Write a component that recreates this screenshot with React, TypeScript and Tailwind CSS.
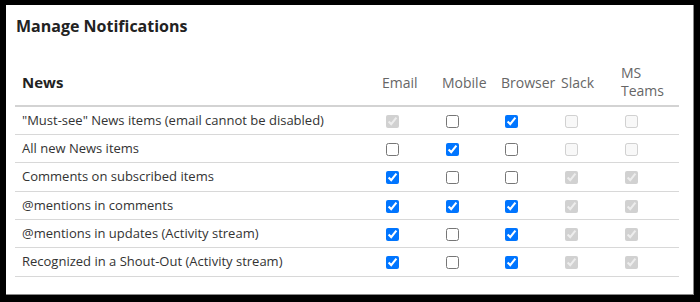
import React from 'react';

type Row = {
    label: string;
    email: boolean;
    mobile: boolean;
    browser: boolean;
    slack: boolean;
    teams: boolean;
    emailLocked?: boolean;
};

// Slack / MS Teams are always locked in this view
const rows: Row[] = [
    { label: '"Must-see" News items (email cannot be disabled)', email: true, mobile: false, browser: true, slack: false, teams: false, emailLocked: true },
    { label: 'All new News items', email: false, mobile: true, browser: false, slack: false, teams: false },
    { label: 'Comments on subscribed items', email: true, mobile: false, browser: false, slack: true, teams: true },
    { label: '@mentions in comments', email: true, mobile: true, browser: true, slack: true, teams: true },
    { label: '@mentions in updates (Activity stream)', email: true, mobile: false, browser: true, slack: true, teams: true },
    { label: 'Recognized in a Shout-Out (Activity stream)', email: true, mobile: false, browser: true, slack: true, teams: true },
];

const Box = ({ checked, disabled }: { checked: boolean; disabled?: boolean }) => (
    <input
        type="checkbox"
        defaultChecked={checked}
        disabled={disabled}
        className="m-0 ml-[4px] w-[13px] h-[13px] align-middle"
    />
);

const App: React.FC = () => {
    return (
        <div className="w-[700px] h-[302px] bg-black pt-[5px] pl-[6px] font-['Open_Sans',sans-serif]">
            <div className="w-[688px] h-[290px] bg-white border-r border-b border-[#8a8a8a] pl-[9px] pt-[10px]">
                {/* Заголовок */}
                <h1 className="pl-[1px] text-[16px] leading-[22px] font-bold text-[#222]">Manage Notifications</h1>

                <table className="mt-[27px] w-[664px] table-fixed border-collapse text-[13px] text-[#333]">
                    <colgroup>
                        <col className="w-[367px]" />
                        <col className="w-[60px]" />
                        <col className="w-[59px]" />
                        <col className="w-[60px]" />
                        <col className="w-[60px]" />
                        <col className="w-[58px]" />
                    </colgroup>
                    <thead>
                        <tr className="border-b-2 border-[#d3d3d3] align-middle">
                            <th className="pl-[7px] pb-[5px] text-left text-[15px] font-bold text-[#222]">News</th>
                            <th className="pb-[5px] text-left text-[14px] font-normal text-[#666]">Email</th>
                            <th className="pb-[5px] text-left text-[14px] font-normal text-[#666]">Mobile</th>
                            <th className="pb-[5px] text-left text-[14px] font-normal text-[#666]">Browser</th>
                            <th className="pb-[5px] text-left text-[14px] font-normal text-[#666]">Slack</th>
                            <th className="pb-[5px] text-left text-[14px] font-normal text-[#666] leading-[18px]">MS<br />Teams</th>
                        </tr>
                    </thead>
                    <tbody>
                        {rows.map((r) => (
                            <tr key={r.label} className="h-[28.4px] border-b border-[#d8d8d8]">
                                <td className="pl-[7px]">{r.label}</td>
                                <td><Box checked={r.email} disabled={r.emailLocked} /></td>
                                <td><Box checked={r.mobile} /></td>
                                <td><Box checked={r.browser} /></td>
                                <td><Box checked={r.slack} disabled /></td>
                                <td><Box checked={r.teams} disabled /></td>
                            </tr>
                        ))}
                    </tbody>
                </table>
            </div>
        </div>
    );
};

export default App;
